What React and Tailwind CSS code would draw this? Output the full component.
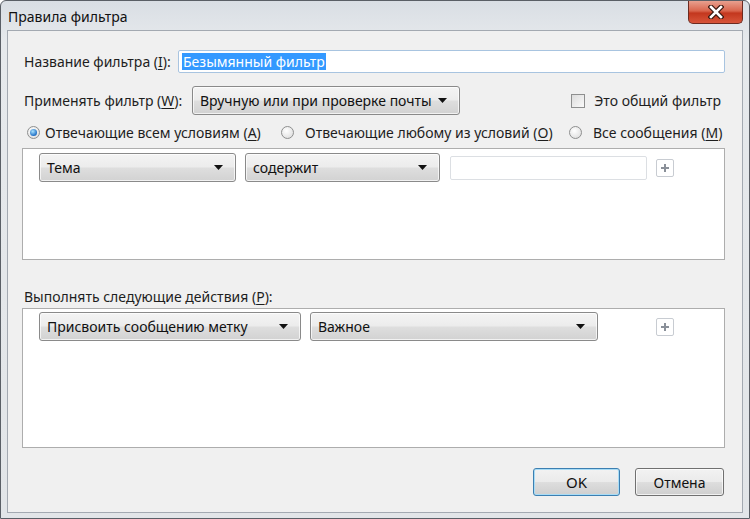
import React from "react";

const font = { fontFamily: '"Noto Sans", "Open Sans", sans-serif' };

function U({ children }) {
  return <span className="underline underline-offset-2">{children}</span>;
}

function Arrow() {
  return (
    <svg width="9" height="5" viewBox="0 0 9 5" className="shrink-0">
      <path d="M0 0 H9 L4.5 5 Z" fill="#111" />
    </svg>
  );
}

function Combo({ text, className = "" }) {
  return (
    <div
      className={`h-[29px] flex items-center justify-between pl-[7px] pr-[12px] rounded-[3px] border border-[#8a8a8a] bg-[linear-gradient(to_bottom,#f4f4f4_0%,#ececec_48%,#dedede_52%,#d2d2d2_100%)] shadow-[inset_0_0_0_1px_rgba(255,255,255,0.7)] text-[14px] text-[#111] ${className}`}
    >
      <span>{text}</span>
      <Arrow />
    </div>
  );
}

function Plus({ className = "" }) {
  return (
    <div className={`w-[18px] h-[18px] rounded-[2px] border border-[#c8ccd2] bg-white flex items-center justify-center ${className}`}>
      <svg width="10" height="10" viewBox="0 0 10 10">
        <path d="M5 1 V9 M1 5 H9" stroke="#8a9099" strokeWidth="2" />
      </svg>
    </div>
  );
}

function Radio({ checked }) {
  return (
    <span className="w-[13px] h-[13px] rounded-full border border-[#8e8f8f] bg-[radial-gradient(circle_at_40%_35%,#ffffff,#d8d8d8)] flex items-center justify-center shrink-0">
      {checked && (
        <span className="w-[7px] h-[7px] rounded-full bg-[radial-gradient(circle_at_40%_35%,#a9e3ff,#1f6fc6_70%,#0f4a8a)]" />
      )}
    </span>
  );
}

export default function App() {
  return (
    <div
      style={font}
      className="w-[750px] h-[519px] flex flex-col overflow-hidden bg-[linear-gradient(to_bottom,#d9dee4,#e6e9ec_40px,#e2e5e8)] border border-[#5a5f66] rounded-t-[6px] text-[#1e1e1e]"
    >
      {/* Title bar */}
      <div className="h-[29px] shrink-0 flex items-start justify-between">
        <div className="pl-[7px] pt-[5px] text-[14px] text-[#111]">Правила фильтра</div>
        <div className="mr-[6px] w-[55px] h-[23px] rounded-b-[5px] border border-t-0 border-[#6b2a20] bg-[linear-gradient(to_bottom,#e8a08f_0%,#d9654d_45%,#c3371e_55%,#d8553a_100%)] flex items-center justify-center">
          <svg width="16" height="14" viewBox="0 0 16 14">
            <path d="M3 2 L13 12 M13 2 L3 12" stroke="#3a1810" strokeWidth="5" strokeLinecap="square" />
            <path d="M3 2 L13 12 M13 2 L3 12" stroke="#ffffff" strokeWidth="2.6" strokeLinecap="square" />
          </svg>
        </div>
      </div>

      {/* Client area */}
      <div className="flex-1 mx-[6px] mb-[5px] border border-[#a3a9b1] bg-[#f0f0f0] flex flex-col pl-[14px] pr-[17px] pt-[19px] text-[14px]">
        {/* Name */}
        <div className="h-[23px] flex items-center">
          <span className="pl-[2px] w-[156px]">
            Название фильтра (<U>I</U>):
          </span>
          <div className="flex-1 h-[23px] border border-[#a8c4e0] rounded-[2px] bg-white flex items-center pl-[3px]">
            <span className="bg-[#3399ff] text-white px-[1px] leading-[17px]">Безымянный фильтр</span>
          </div>
        </div>

        {/* Apply */}
        <div className="mt-[13px] h-[29px] flex items-center">
          <span className="pl-[2px] w-[170px]">
            Применять фильтр (<U>W</U>):
          </span>
          <Combo text="Вручную или при проверке почты" className="w-[268px]" />
          <div className="ml-auto flex items-center gap-[9px] pr-[4px]">
            <span className="w-[14px] h-[14px] border border-[#8e8f8f] bg-[linear-gradient(135deg,#dcdcdc,#fafafa)]" />
            <span>Это общий фильтр</span>
          </div>
        </div>

        {/* Radios */}
        <div className="mt-[9px] h-[16px] flex items-center">
          <div className="flex items-center gap-[5px] pl-[5px] w-[259px]">
            <Radio checked />
            <span>
              Отвечающие всем условиям (<U>A</U>)
            </span>
          </div>
          <div className="flex items-center gap-[11px] w-[288px]">
            <Radio />
            <span>
              Отвечающие любому из условий (<U>O</U>)
            </span>
          </div>
          <div className="flex items-center gap-[11px]">
            <Radio />
            <span>
              Все сообщения (<U>M</U>)
            </span>
          </div>
        </div>

        {/* Conditions box */}
        <div className="mt-[8px] h-[112px] border border-[#adadad] bg-white pl-[16px] pt-[4px]">
          <div className="flex items-center">
            <Combo text="Тема" className="w-[197px]" />
            <Combo text="содержит" className="w-[195px] ml-[9px]" />
            <div className="w-[197px] h-[24px] ml-[10px] border border-[#dcdfe3] rounded-[2px] bg-white" />
            <Plus className="ml-[9px]" />
          </div>
        </div>

        {/* Actions label */}
        <div className="mt-[28px] h-[16px] flex items-center pl-[2px]">
          <span>
            Выполнять следующие действия (<U>P</U>):
          </span>
        </div>

        {/* Actions box */}
        <div className="mt-[4px] h-[140px] border border-[#adadad] bg-white pl-[16px] pt-[3px]">
          <div className="flex items-center">
            <Combo text="Присвоить сообщению метку" className="w-[262px]" />
            <Combo text="Важное" className="w-[288px] ml-[9px]" />
            <Plus className="ml-[58px]" />
          </div>
        </div>

        {/* Buttons */}
        <div className="mt-[20px] flex justify-end gap-[15px] pr-[1px]">
          <div className="w-[87px] h-[28px] rounded-[3px] border border-[#3c7fb1] bg-[linear-gradient(to_bottom,#f2f2f2_0%,#ebebeb_48%,#dddddd_52%,#cfcfcf_100%)] shadow-[inset_0_0_0_1px_#a8dcf6] flex items-center justify-center text-[15px] text-[#111]">
            OK
          </div>
          <div className="w-[89px] h-[28px] rounded-[3px] border border-[#707070] bg-[linear-gradient(to_bottom,#f2f2f2_0%,#ebebeb_48%,#dddddd_52%,#cfcfcf_100%)] shadow-[inset_0_0_0_1px_rgba(255,255,255,0.7)] flex items-center justify-center text-[14px] text-[#111]">
            Отмена
          </div>
        </div>
      </div>
    </div>
  );
}
